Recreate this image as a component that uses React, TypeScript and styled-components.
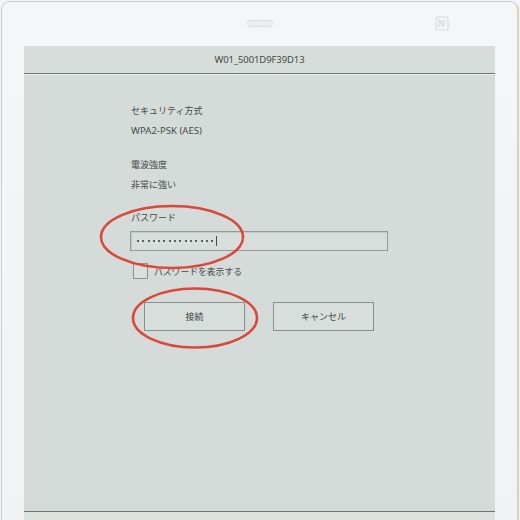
import styled, { createGlobalStyle } from 'styled-components';

// Wi-Fi password screen on an e-paper tablet, with the two red hand-drawn marks

const GlobalStyle = createGlobalStyle`
  html, body {
    margin: 0;
    padding: 0;
    background: #f3f4f6;
    overflow: hidden;
  }
  body {
    font-family: 'Noto Sans CJK JP', 'Noto Sans', sans-serif;
  }
`;

const Device = styled.div`
  position: relative;
  box-sizing: border-box;
  width: 518px;
  height: 540px;
  margin: 1px 0 0 1px;
  background: linear-gradient(180deg, #f5f6f8 0%, #f1f2f4 100%);
  border: 1px solid #c9cbce;
  border-right: 2px solid #dccfb4;
  border-radius: 9px 9px 0 0;
  padding: 44px 22px 0 22px;
  display: flex;
  flex-direction: column;
`;

const TopBar = styled.div`
  position: absolute;
  top: 13px;
  left: 0;
  right: 0;
  height: 16px;
  display: flex;
  justify-content: center;
  align-items: center;
`;

const Speaker = styled.div`
  width: 24px;
  height: 5px;
  border: 1px solid #dadcdf;
  border-radius: 4px;
  background: #eceef0;
`;

const NfcMark = styled.svg`
  position: absolute;
  right: 68px;
  top: 1px;
`;

const Screen = styled.div`
  background: #d4dbd8;
  display: flex;
  flex-direction: column;
  height: 474px;
`;

const Header = styled.div`
  height: 27px;
  display: flex;
  align-items: center;
  justify-content: center;
  background: #d7dddA;
  border-bottom: 1px solid #6f7471;
  box-shadow: 0 1px 0 #eef1ef;
  font-family: 'Noto Sans', sans-serif;
  font-size: 9.5px;
  color: #454847;
  letter-spacing: -0.1px;
`;

const Body = styled.div`
  flex: 1;
  display: flex;
  flex-direction: column;
  padding: 27px 0 0 107px;
  color: #474a49;
`;

const Footer = styled.div`
  height: 8px;
  border-top: 1px solid #6e7370;
  background: #dde2df;
`;

const Line = styled.div<{ $gap?: number }>`
  height: 20px;
  line-height: 20px;
  font-size: 9px;
  margin-top: ${(p) => p.$gap ?? 0}px;
  white-space: nowrap;
`;

const Latin = styled(Line)`
  font-family: 'Noto Sans', sans-serif;
  font-size: 9.6px;
`;

const Field = styled.div`
  box-sizing: border-box;
  margin: 3px 0 0 -1px;
  width: 258px;
  height: 20px;
  border: 1px solid #959a97;
  background: #d8dedb;
  box-shadow: inset 1px 1px 0 #c3c9c6;
  display: flex;
  align-items: center;
  padding-left: 6px;
  gap: 3.3px;
`;

const Dot = styled.span`
  width: 2px;
  height: 2px;
  border-radius: 50%;
  background: #333534;
`;

const Caret = styled.span`
  width: 1px;
  height: 10px;
  background: #4a4c4b;
  margin-left: 0;
`;

const CheckRow = styled.label`
  display: flex;
  align-items: center;
  gap: 6px;
  margin: 12px 0 0 2px;
  height: 16px;
  font-size: 8.8px;
`;

const Box = styled.span`
  box-sizing: border-box;
  width: 15px;
  height: 16px;
  border: 1px solid #8f9491;
  background: #d9dfdc;
`;

const Buttons = styled.div`
  display: flex;
  gap: 28px;
  margin: 23px 0 0 13px;
`;

const Button = styled.div`
  box-sizing: border-box;
  width: 101px;
  height: 29px;
  border: 1px solid #8a8f8c;
  background: #d8dedb;
  display: flex;
  align-items: center;
  justify-content: center;
  font-size: 9px;
  color: #434645;
`;

const Marks = styled.svg`
  position: absolute;
  left: 0;
  top: 0;
  pointer-events: none;
`;

export default function App() {
  return (
    <>
      <GlobalStyle />
      <Device>
        <TopBar>
          <Speaker />
          <NfcMark width="14" height="15" viewBox="0 0 14 15">
            <rect x="1" y="1" width="12" height="13" rx="1.5" fill="none" stroke="#d8dadd" strokeWidth="1.2" />
            <path d="M4 11V4l3 5V4M9 4v7" fill="none" stroke="#d8dadd" strokeWidth="1.2" />
          </NfcMark>
        </TopBar>
        <Screen>
          <Header>W01_5001D9F39D13</Header>
          <Body>
            <Line>セキュリティ方式</Line>
            <Latin>WPA2-PSK (AES)</Latin>
            <Line $gap={14}>電波強度</Line>
            <Line>非常に強い</Line>
            <Line $gap={13}>パスワード</Line>
            <Field>
              {Array.from({ length: 15 }).map((_, i) => (
                <Dot key={i} />
              ))}
              <Caret />
            </Field>
            <CheckRow>
              <Box />
              パスワードを表示する
            </CheckRow>
            <Buttons>
              <Button>接続</Button>
              <Button>キャンセル</Button>
            </Buttons>
          </Body>
          <Footer />
        </Screen>
      </Device>
      <Marks width="520" height="520" viewBox="0 0 520 520">
        <ellipse cx="172" cy="237" rx="71" ry="31" fill="none" stroke="#d9483a" strokeWidth="2.6" />
        <ellipse cx="195" cy="318" rx="62" ry="29.5" fill="none" stroke="#d9483a" strokeWidth="2.6" />
      </Marks>
    </>
  );
}
